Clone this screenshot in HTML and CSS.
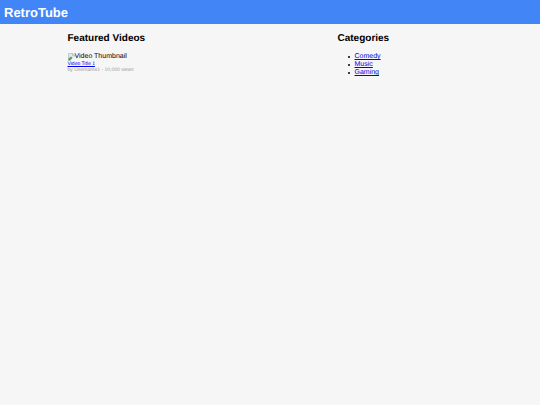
FILE: index.html
```html
<!DOCTYPE html>
<html lang="en">
<head>
<meta charset="utf-8">
<title>RetroTube</title>
<link rel="stylesheet" href="styles.css">
</head>
<body>
<header class="site-header"><h1 class="brand">RetroTube</h1></header>
<main class="container">
  <section class="videos">
    <h2 class="heading">Featured Videos</h2>
    <article class="video">
      <div class="thumbnail">
        <svg class="thumbnail-icon" viewBox="0 0 14 16" aria-hidden="true">
          <path d="M1 1h8l4 4v10H1z" fill="#dce8fa" stroke="#a0a0a0"/>
          <path d="M9 1v4h4z" fill="#fff" stroke="#a0a0a0"/>
          <path d="M1 15v-4L6 7l3 3-5 5z" fill="#4ea64a"/>
          <path d="M5 15l9-8v9H4z" fill="#f6f6f6"/>
        </svg>
        <span>Video Thumbnail</span>
      </div>
      <a class="video-title" href="#">Video Title 1</a>
      <p class="video-meta">by Username1 - 10,000 views</p>
    </article>
  </section>
  <aside class="categories">
    <h2 class="heading">Categories</h2>
    <ul class="category-list">
      <li><a href="#">Comedy</a></li>
      <li><a href="#">Music</a></li>
      <li><a href="#">Gaming</a></li>
    </ul>
  </aside>
</main>
</body>
</html>
```
FILE: styles.css
```css
body {
  margin: 0;
  background: #f6f6f6;
  color: #000;
  font: 7px/8px "Liberation Sans", Arial, sans-serif;
  text-rendering: geometricPrecision;
}

a {
  color: #0000ee;
}

.site-header {
  padding: 5px 4px 3px;
  background: #4285f6;
  color: #fff;
}

.brand {
  margin: 0;
  font-size: 13px;
  line-height: 16px;
}

.container {
  display: grid;
  grid-template-columns: 2fr 1fr;
  width: 75%;
  margin: 0 auto;
  padding-top: 9px;
}

.heading {
  margin: 0 0 8px;
  font-size: 10px;
  line-height: 12px;
}

.thumbnail {
  display: flex;
  align-items: center;
}

.thumbnail-icon {
  width: 7px;
  height: 8px;
}

.video-title,
.video-meta {
  display: block;
  margin: 0;
  font-size: 5px;
  line-height: 6px;
}

.video-title {
  width: fit-content;
}

.video-meta {
  color: #999;
}

.category-list {
  margin: 0;
  padding-left: 10px;
  list-style: none;
}

.category-list li {
  display: flex;
  align-items: center;
  gap: 5px;
}

.category-list li::before {
  content: "";
  width: 2px;
  height: 2px;
  border-radius: 50%;
  background: #000;
}
```
